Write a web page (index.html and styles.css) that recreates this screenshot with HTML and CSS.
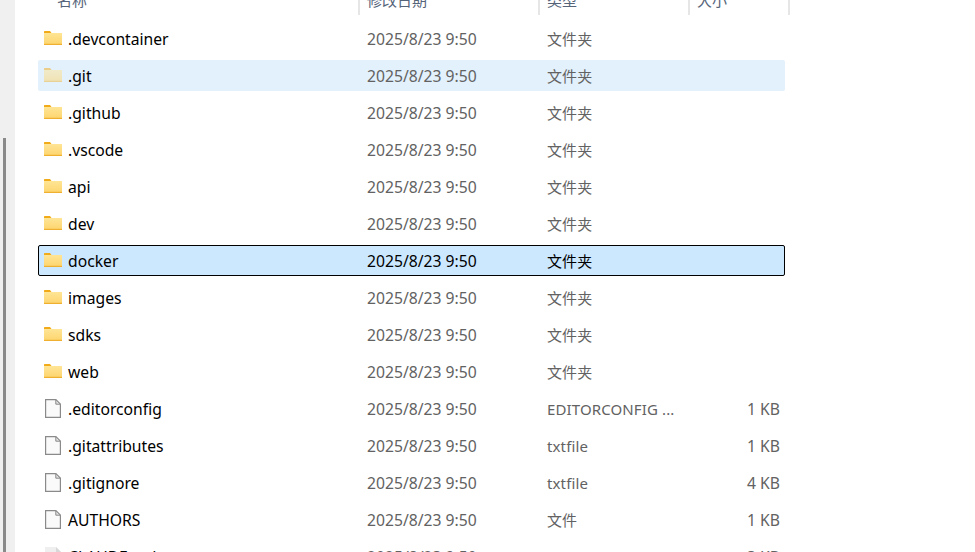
FILE: index.html
```html
<!DOCTYPE html>
<html lang="zh-CN">
<head>
<meta charset="utf-8">
<title>docker</title>
<link rel="stylesheet" href="styles.css">
</head>
<body>
<svg class="defs" width="0" height="0" aria-hidden="true">
  <defs>
    <linearGradient id="folderfill" x1="0" y1="0" x2="0" y2="1">
      <stop offset="0" stop-color="#ffe596"/>
      <stop offset="1" stop-color="#fdd46c"/>
    </linearGradient>
  </defs>
  <symbol id="folder" viewBox="0 0 18 14">
    <path d="M0 1C0 .4.4 0 1 0h5l1.5 2H0z" fill="#f2ab18"/>
    <path d="M0 2h18v11.2c0 .5-.3 .8-.8 .8H.8c-.5 0-.8-.3-.8-.8z" fill="url(#folderfill)"/>
    <rect x="0" y="12.8" width="18" height="1.2" fill="#efb02f"/>
  </symbol>
  <symbol id="file" viewBox="0 0 16 19">
    <path d="M.6 .6h10.2L15.4 5.2v13.2H.6z" fill="#fafafa" stroke="#8a8a8a" stroke-width="1.2"/>
    <path d="M10.8 .6v4.6h4.6z" fill="#e2e2e2" stroke="#8a8a8a" stroke-width="1"/>
  </symbol>
  <symbol id="mdfile" viewBox="0 0 16 19">
    <path d="M0 0h11l5 5v14H0z" fill="#efefef"/>
    <path d="M11 0v5h5z" fill="#d8d8d8"/>
  </symbol>
</svg>
<div class="rail"><div class="thumb"></div></div>
<main class="pane">
  <div class="head">
    <div class="hcell c-name">名称</div>
    <div class="hcell c-date">修改日期</div>
    <div class="hcell c-type">类型</div>
    <div class="hcell c-size">大小</div>
  </div>
  <div class="rows">
    <div class="row"><div class="c-name name"><svg class="ico-folder"><use href="#folder"/></svg>.devcontainer</div><div class="c-date">2025/8/23 9:50</div><div class="c-type">文件夹</div><div class="c-size"></div></div>
    <div class="row hover"><div class="c-name name"><svg class="ico-folder faded"><use href="#folder"/></svg>.git</div><div class="c-date">2025/8/23 9:50</div><div class="c-type">文件夹</div><div class="c-size"></div></div>
    <div class="row"><div class="c-name name"><svg class="ico-folder"><use href="#folder"/></svg>.github</div><div class="c-date">2025/8/23 9:50</div><div class="c-type">文件夹</div><div class="c-size"></div></div>
    <div class="row"><div class="c-name name"><svg class="ico-folder"><use href="#folder"/></svg>.vscode</div><div class="c-date">2025/8/23 9:50</div><div class="c-type">文件夹</div><div class="c-size"></div></div>
    <div class="row"><div class="c-name name"><svg class="ico-folder"><use href="#folder"/></svg>api</div><div class="c-date">2025/8/23 9:50</div><div class="c-type">文件夹</div><div class="c-size"></div></div>
    <div class="row"><div class="c-name name"><svg class="ico-folder"><use href="#folder"/></svg>dev</div><div class="c-date">2025/8/23 9:50</div><div class="c-type">文件夹</div><div class="c-size"></div></div>
    <div class="row selected"><div class="c-name name"><svg class="ico-folder"><use href="#folder"/></svg>docker</div><div class="c-date">2025/8/23 9:50</div><div class="c-type">文件夹</div><div class="c-size"></div></div>
    <div class="row"><div class="c-name name"><svg class="ico-folder"><use href="#folder"/></svg>images</div><div class="c-date">2025/8/23 9:50</div><div class="c-type">文件夹</div><div class="c-size"></div></div>
    <div class="row"><div class="c-name name"><svg class="ico-folder"><use href="#folder"/></svg>sdks</div><div class="c-date">2025/8/23 9:50</div><div class="c-type">文件夹</div><div class="c-size"></div></div>
    <div class="row"><div class="c-name name"><svg class="ico-folder"><use href="#folder"/></svg>web</div><div class="c-date">2025/8/23 9:50</div><div class="c-type">文件夹</div><div class="c-size"></div></div>
    <div class="row"><div class="c-name name"><svg class="ico-file"><use href="#file"/></svg>.editorconfig</div><div class="c-date">2025/8/23 9:50</div><div class="c-type">EDITORCONFIG ...</div><div class="c-size">1 KB</div></div>
    <div class="row"><div class="c-name name"><svg class="ico-file"><use href="#file"/></svg>.gitattributes</div><div class="c-date">2025/8/23 9:50</div><div class="c-type">txtfile</div><div class="c-size">1 KB</div></div>
    <div class="row"><div class="c-name name"><svg class="ico-file"><use href="#file"/></svg>.gitignore</div><div class="c-date">2025/8/23 9:50</div><div class="c-type">txtfile</div><div class="c-size">4 KB</div></div>
    <div class="row"><div class="c-name name"><svg class="ico-file"><use href="#file"/></svg>AUTHORS</div><div class="c-date">2025/8/23 9:50</div><div class="c-type">文件</div><div class="c-size">1 KB</div></div>
    <div class="row"><div class="c-name name"><svg class="ico-file"><use href="#mdfile"/></svg>CLAUDE.md</div><div class="c-date">2025/8/23 9:50</div><div class="c-type">Markdown File</div><div class="c-size">3 KB</div></div>
  </div>
</main>
</body>
</html>
```
FILE: styles.css
```css
* { box-sizing: border-box; }
html, body { margin: 0; height: 100%; overflow: hidden; background: #fff; }
body {
  display: flex;
  font-family: "Noto Sans", "Noto Sans CJK SC", sans-serif;
  font-size: 15.7px;
  color: #626262;
}
.defs { position: absolute; }
.rail { width: 15px; flex: none; background: #f0f0f0; padding: 138px 0 0 3px; }
.thumb { width: 3px; height: 100%; background: #8a8a8a; }
.pane { flex: 1; padding: 0 0 0 23px; margin-top: -6px; }
.head { display: flex; height: 21px; align-items: flex-start; color: #56647a; font-size: 15px; line-height: 13px; }
.hcell { height: 21px; border-right: 2px solid #e6e6e6; }
.head .c-name { width: 322px; padding-left: 19px; }
.head .c-date { width: 180px; padding-left: 7px; }
.head .c-type { width: 150px; padding-left: 7px; }
.head .c-size { width: 100px; padding-left: 7px; }
.rows { margin-top: 8px; width: 747px; display: flex; flex-direction: column; gap: 6px; }
.row { display: flex; height: 31px; align-items: center; border-radius: 2px; border: 1px solid transparent; line-height: 20px; }
.row .c-name { width: 320px; }
.row .c-date { width: 180px; padding-left: 8px; }
.row .c-type { width: 150px; padding-left: 8px; white-space: nowrap; overflow: hidden; font-size: 15px; letter-spacing: .12px; }
.row .c-size { width: 91px; text-align: right; }
.name { display: flex; align-items: center; padding-left: 5px; color: #000; }
.ico-folder { width: 18px; height: 14px; margin-right: 6px; flex: none; position: relative; top: -.5px; }
.ico-file { width: 16px; height: 19px; margin: 0 7px 0 1px; flex: none; }
.faded { opacity: .5; }
.hover { background: #e3f1fc; }
.selected { background: #cce8ff; border-color: #000; color: #000; }
```
